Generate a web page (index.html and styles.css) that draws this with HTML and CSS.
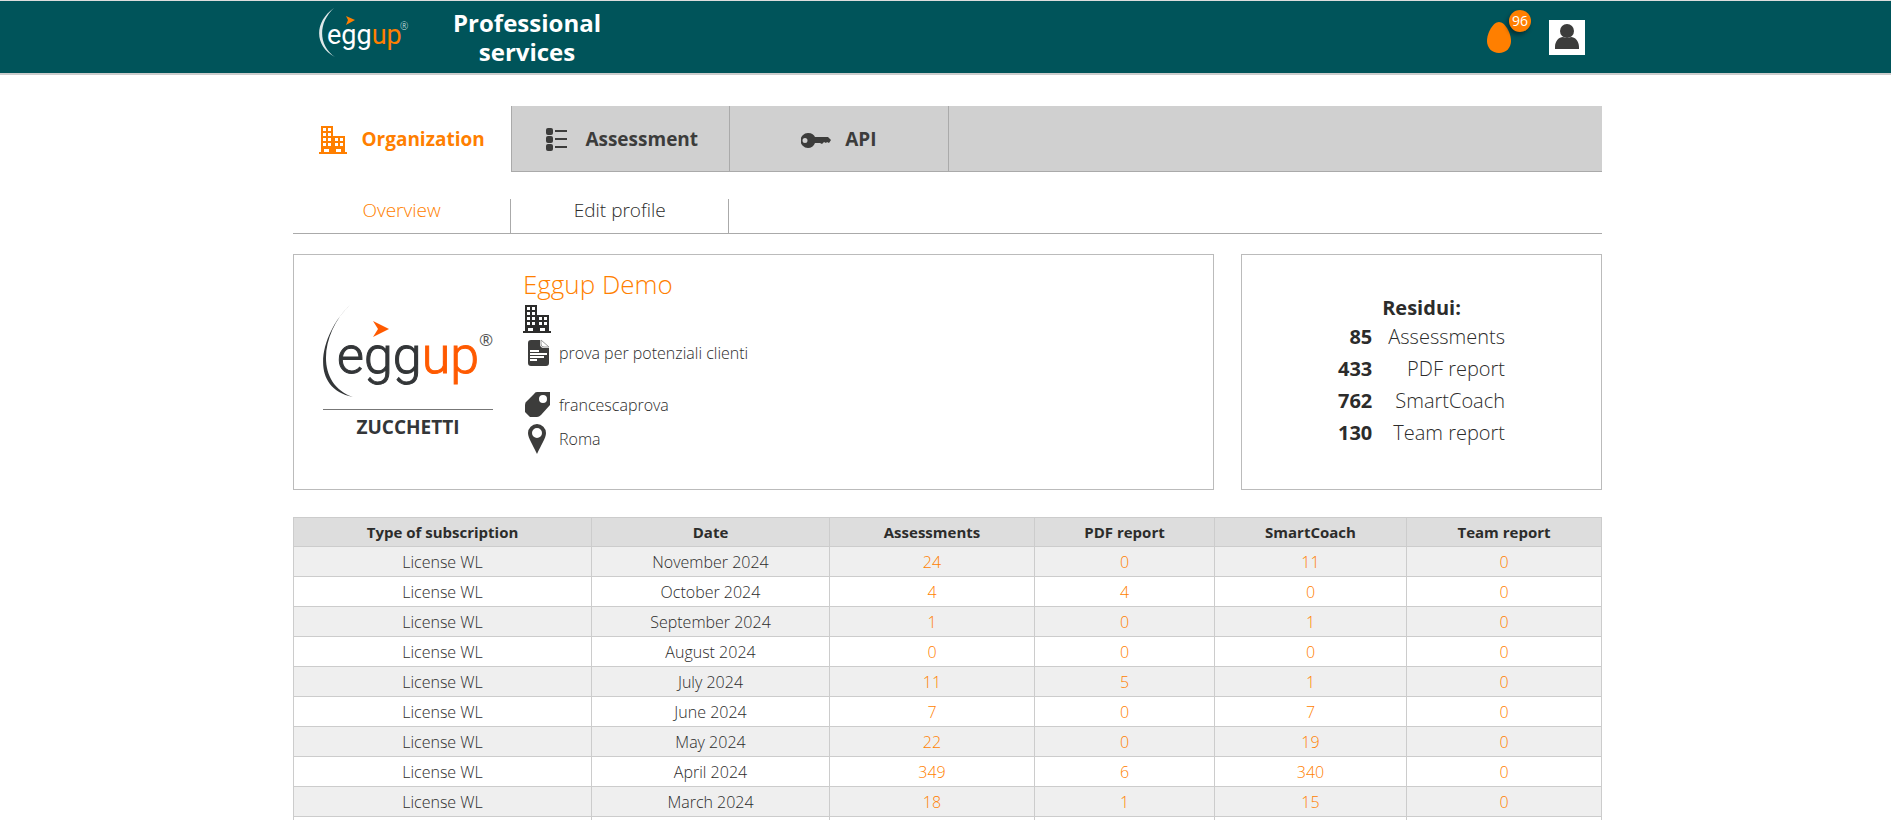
FILE: index.html
```
<!DOCTYPE html>
<html lang="en">
<head>
  <meta charset="UTF-8" />
  <meta name="viewport" content="width=device-width, initial-scale=1.0"/>
  <title>Eggup - Professional services</title>
  <link rel="stylesheet" href="styles.css">
</head>
<body>

  <!-- Shared icons -->
  <svg class="sprite" aria-hidden="true">
    <symbol id="icon-building" viewBox="0 0 28 28">
      <path fill="currentColor" fill-rule="evenodd" d="M2 0h12v10h12v16h2v2H0v-2h2zM4 2v3h3V2zM9 2v3h3V2zM4 7v3h3V7zM9 7v3h3V7zM4 12v3h3v-3zM9 12v3h3v-3zM4 17v3h3v-3zM9 17v3h3v-3zM16 12v3h3v-3zM21 12v3h3v-3zM16 17v3h3v-3zM21 17v3h3v-3zM5 23v3h5v-3zM17 23v3h5v-3z"/>
    </symbol>
  </svg>

  <header class="header">
    <div class="page header-inner">
      <a href="#" class="logo" aria-label="eggup">
        <svg width="92" height="50" viewBox="0 0 92 50">
          <path fill="#dfe8e9" d="M15 0C-5 14-5 38 16 49C-1 37-1 15 15 0z"/>
          <path fill="#ff7f00" d="M27 8l9 4-9 5 2-5z"/>
          <text x="8" y="36" class="logo-word"><tspan fill="#fff">egg</tspan><tspan fill="#ff7f00">up</tspan></text>
          <text x="81" y="22" class="logo-reg" fill="#dfe8e9">®</text>
        </svg>
      </a>
      <h1>Professional services</h1>
      <div class="user">
        <a href="#" class="eggs" aria-label="96 eggs">
          <svg width="24" height="31" viewBox="0 0 24 31">
            <path fill="#ff7f00" d="M12 0C18 0 24 11 24 19C24 26 19 31 12 31S0 26 0 19C0 11 6 0 12 0z"/>
          </svg>
          <span class="badge">96</span>
        </a>
        <button class="avatar" aria-label="Account">
          <svg width="26" height="26" viewBox="0 0 26 26">
            <circle cx="13" cy="7" r="7" fill="#3c3c3b"/>
            <path fill="#3c3c3b" d="M1 25v-2c0-6 4-10 8-10q4 2 8 0c4 0 8 4 8 10v2z"/>
          </svg>
        </button>
      </div>
    </div>
  </header>

  <main class="page">
    <nav class="tabs">
      <a href="#" class="tab active"><svg class="icon"><use href="#icon-building"/></svg>Organization</a>
      <a href="#" class="tab">
        <svg class="icon" viewBox="0 0 28 28" fill="#3c3c3b">
          <rect x="3" y="2" width="7" height="7" rx="2"/>
          <rect x="3" y="10" width="7" height="7" rx="2"/>
          <rect x="3" y="18" width="7" height="7" rx="2"/>
          <path d="M12 4h12v2H12zM12 12h12v2H12zM12 20h12v2H12z"/>
        </svg>Assessment</a>
      <a href="#" class="tab">
        <svg class="icon key" viewBox="0 0 30 28" fill="#3c3c3b">
          <path fill-rule="evenodd" d="M7 7c4 0 6 2 7 4h13l3 3-2 3-2-1-1 1-2-1-2 2-2-1H14c-1 3-4 5-7 5a7 7 0 0 1 0-15zM4 12a2 2 0 1 0 0 5a2 2 0 1 0 0-5z"/>
        </svg>API</a>
      <span class="tab-rest"></span>
    </nav>

    <nav class="subtabs">
      <a href="#" class="subtab active">Overview</a>
      <a href="#" class="subtab">Edit profile</a>
    </nav>

    <div class="cards">
      <section class="card company">
        <svg class="company-logo" width="175" height="142" viewBox="0 0 175 142" role="img" aria-label="eggup Zucchetti">
          <path fill="#333638" d="M30 2C3 27-15 84 33 94C-6 81 1 29 30 2z"/>
          <path fill="#ff5a00" d="M53 18l16 8-16 8 5-8z"/>
          <text x="17" y="70" class="company-word"><tspan class="egg">egg</tspan><tspan class="up">up</tspan></text>
          <text x="159" y="43" class="company-reg">®</text>
          <path fill="#777" d="M3 106h170v1H3z"/>
          <text x="88" y="131" class="company-owner">ZUCCHETTI</text>
        </svg>
        <div class="details">
          <h2>Eggup Demo</h2>
          <p><svg class="icon"><use href="#icon-building"/></svg></p>
          <p class="about">
            <svg class="icon" viewBox="0 0 28 28">
              <path fill="#3c3c3b" d="M8 1h9v4q0 4 4 4h5v15q0 3-3 3H8q-3 0-3-3V4q0-3 3-3z"/>
              <path fill="#fff" stroke="#999" d="M18 1l8 7h-5q-3 0-3-3z"/>
              <path stroke="#fff" stroke-width="2" d="M7 12h9M7 15h17M7 18h14M7 21h7"/>
            </svg>prova per potenziali clienti</p>
          <p>
            <svg class="icon" viewBox="0 0 28 28" fill="#3c3c3b">
              <path fill-rule="evenodd" d="M14 1h13v13L18 24q-2 2-4 2H7l-5-5v-7q0-3 2-4l7-7q1-2 3-2zM20 4a4 4 0 1 0 0 8a4 4 0 1 0 0-8z"/>
            </svg>francescaprova</p>
          <p>
            <svg class="icon pin" viewBox="0 0 28 30" fill="#3c3c3b">
              <path fill-rule="evenodd" d="M14 0a9 9 0 0 1 9 9c0 5-5 12-9 21C10 21 5 14 5 9a9 9 0 0 1 9-9zM14 4a5 5 0 1 0 0 10a5 5 0 1 0 0-10z"/>
            </svg>Roma</p>
        </div>
      </section>

      <section class="card residui">
        <table>
          <caption>Residui:</caption>
          <tr><td class="count">85</td><td>Assessments</td></tr>
          <tr><td class="count">433</td><td>PDF report</td></tr>
          <tr><td class="count">762</td><td>SmartCoach</td></tr>
          <tr><td class="count">130</td><td>Team report</td></tr>
        </table>
      </section>
    </div>

    <table class="usage">
      <thead>
        <tr>
          <th class="col-type">Type of subscription</th>
          <th class="col-date">Date</th>
          <th class="col-assessments">Assessments</th>
          <th class="col-pdf">PDF report</th>
          <th class="col-coach">SmartCoach</th>
          <th>Team report</th>
        </tr>
      </thead>
      <tbody>
        <tr><td>License WL</td><td>November 2024</td><td class="num">24</td><td class="num">0</td><td class="num">11</td><td class="num">0</td></tr>
        <tr><td>License WL</td><td>October 2024</td><td class="num">4</td><td class="num">4</td><td class="num">0</td><td class="num">0</td></tr>
        <tr><td>License WL</td><td>September 2024</td><td class="num">1</td><td class="num">0</td><td class="num">1</td><td class="num">0</td></tr>
        <tr><td>License WL</td><td>August 2024</td><td class="num">0</td><td class="num">0</td><td class="num">0</td><td class="num">0</td></tr>
        <tr><td>License WL</td><td>July 2024</td><td class="num">11</td><td class="num">5</td><td class="num">1</td><td class="num">0</td></tr>
        <tr><td>License WL</td><td>June 2024</td><td class="num">7</td><td class="num">0</td><td class="num">7</td><td class="num">0</td></tr>
        <tr><td>License WL</td><td>May 2024</td><td class="num">22</td><td class="num">0</td><td class="num">19</td><td class="num">0</td></tr>
        <tr><td>License WL</td><td>April 2024</td><td class="num">349</td><td class="num">6</td><td class="num">340</td><td class="num">0</td></tr>
        <tr><td>License WL</td><td>March 2024</td><td class="num">18</td><td class="num">1</td><td class="num">15</td><td class="num">0</td></tr>
        <tr><td></td><td></td><td></td><td></td><td></td><td></td></tr>
      </tbody>
    </table>
  </main>

</body>
</html>
```
FILE: styles.css
```
* {
  box-sizing: border-box;
}

html {
  overflow: hidden;
}

body {
  margin: 0;
  font-family: "Open Sans", "Noto Sans", sans-serif;
  font-weight: 300;
  font-size: 16px;
  color: #2c2c2b;
  background: #fff;
}

a {
  color: inherit;
  text-decoration: none;
}

.sprite {
  display: none;
}

.page {
  width: 100%;
  max-width: 1313px;
  margin: 0 auto;
  padding-left: 4px;
}

main {
  padding-top: 31px;
}

/* Header */
.header {
  background: #00545a;
  border-top: 1px solid #ddd;
  border-bottom: 2px solid #ccc;
}

.header-inner {
  display: flex;
  align-items: center;
  height: 72px;
  padding: 0 17px 0 30px;
}

.logo {
  display: flex;
  margin-bottom: 8px;
}

.logo-word {
  font-family: Roboto, sans-serif;
  font-weight: 400;
  font-size: 27px;
}

.logo-reg {
  font-size: 10px;
}

.header h1 {
  width: 180px;
  margin: 0 auto 0 26px;
  font-size: 24px;
  font-weight: 700;
  line-height: 29px;
  text-align: center;
  color: #fff;
}

.user {
  display: flex;
  align-items: center;
  gap: 38px;
}

.eggs {
  position: relative;
  display: flex;
}

.badge {
  position: absolute;
  left: 22px;
  top: -12px;
  width: 22px;
  height: 22px;
  border-radius: 50%;
  background: #ff7f00;
  box-shadow: -2px 3px 4px rgba(0, 0, 0, 0.4);
  color: #fff;
  font-size: 14px;
  font-weight: 400;
  line-height: 21px;
  text-align: center;
}

.avatar {
  display: flex;
  align-items: center;
  justify-content: center;
  width: 36px;
  height: 35px;
  padding: 0;
  border: 0;
  background: #fff;
  cursor: pointer;
}

/* Tabs */
.tabs {
  display: grid;
  grid-template-columns: repeat(6, 1fr);
  height: 66px;
}

.tab {
  display: flex;
  align-items: center;
  justify-content: center;
  gap: 14px;
  font-size: 19px;
  font-weight: 700;
  color: #3c3c3b;
}

.tab .icon {
  margin-top: 2px;
}

.tab .key {
  width: 30px;
}

.tab:not(.active),
.tab-rest {
  background: #d0d0d0;
  border-left: 1px solid #aaa;
  border-bottom: 1px solid #aaa;
}

.tab-rest {
  grid-column: span 3;
}

.active {
  color: #ff7f00;
}

.icon {
  flex: none;
  width: 28px;
  height: 28px;
}

.subtabs {
  display: grid;
  grid-template-columns: repeat(6, 1fr);
  margin-top: 27px;
  border-bottom: 1px solid #aaa;
}

.subtab {
  height: 34px;
  font-size: 19px;
  line-height: 23px;
  text-align: center;
  border-right: 1px solid #aaa;
}

/* Cards */
.cards {
  display: flex;
  gap: 27px;
  margin-top: 20px;
}

.card {
  height: 236px;
  border: 1px solid #bbb;
}

.company {
  display: flex;
  flex: 1;
  padding: 11px 26px;
}

.company-logo {
  flex: none;
  margin-top: 37px;
}

.company-word {
  font-family: Roboto, sans-serif;
  font-weight: 300;
  font-size: 52px;
}

.company-word .egg {
  fill: #333638;
  stroke: #333638;
}

.company-word .up {
  fill: #ff5a00;
  stroke: #ff5a00;
}

.company-reg {
  font-size: 17px;
  font-weight: 400;
  fill: #555;
}

.company-owner {
  font-size: 19px;
  font-weight: 700;
  fill: #333638;
  text-anchor: middle;
}

.details {
  margin-left: 28px;
}

.details h2 {
  margin: 0;
  font-size: 26px;
  font-weight: 300;
  line-height: 36px;
  color: #ff7f00;
}

.details p {
  display: flex;
  align-items: center;
  gap: 8px;
  height: 34px;
  margin: 0;
  color: #2c2c2b;
}

.details .about {
  margin-bottom: 18px;
}

.details .pin {
  height: 30px;
}

.residui {
  display: flex;
  align-items: center;
  justify-content: center;
  width: 361px;
  font-size: 20px;
}

.residui table {
  border-collapse: collapse;
}

.residui caption {
  font-weight: 700;
  line-height: 24px;
}

.residui td {
  height: 32px;
  padding: 0 0 0 16px;
  text-align: right;
}

.residui .count {
  padding: 0;
  font-weight: 700;
}

/* Subscriptions table */
.usage {
  width: 100%;
  margin-top: 27px;
  border-collapse: collapse;
  table-layout: fixed;
  text-align: center;
}

.usage th,
.usage td {
  height: 30px;
  padding: 0;
  border: 1px solid #ccc;
}

.usage th {
  height: 29px;
  background: #ddd;
  font-size: 15px;
  font-weight: 700;
}

.usage tbody tr:nth-child(odd) {
  background: #efefef;
}

.usage .num {
  color: #ff7f00;
}

.col-type {
  width: 298px;
}

.col-date {
  width: 238px;
}

.col-assessments {
  width: 205px;
}

.col-pdf {
  width: 180px;
}

.col-coach {
  width: 192px;
}
```
